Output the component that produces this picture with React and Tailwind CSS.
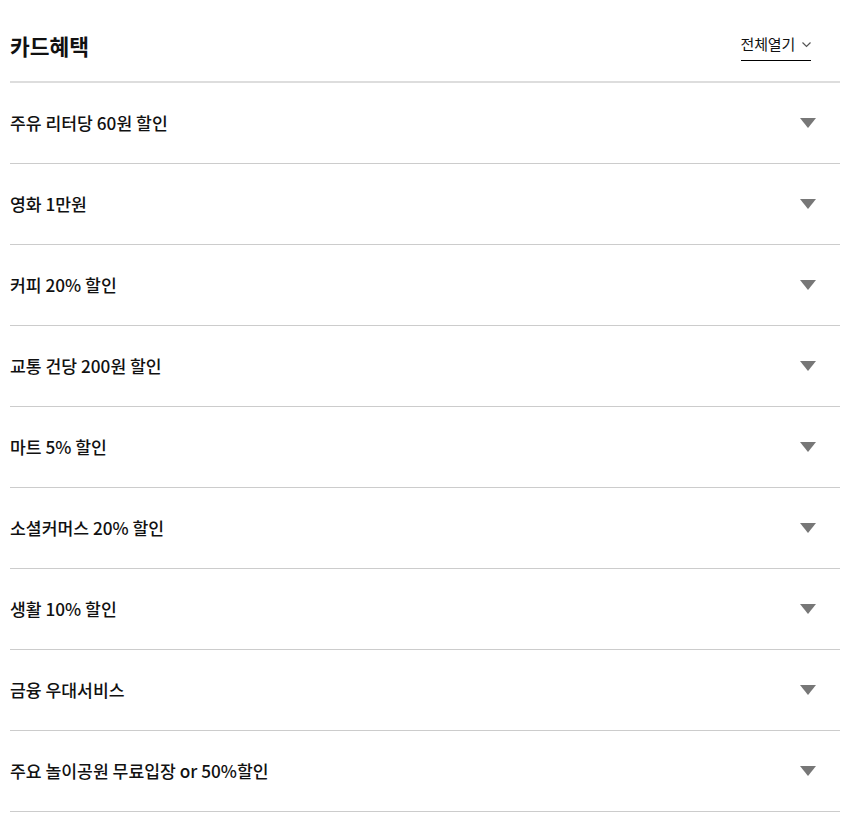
import React, { useState } from "react";

const BENEFITS = [
  "주유 리터당 60원 할인",
  "영화 1만원",
  "커피 20% 할인",
  "교통 건당 200원 할인",
  "마트 5% 할인",
  "소셜커머스 20% 할인",
  "생활 10% 할인",
  "금융 우대서비스",
  "주요 놀이공원 무료입장 or 50%할인",
];

const BenefitRow = ({ title, open, onToggle }) => (
  <li className="border-b border-[#cccccc]">
    <button
      onClick={onToggle}
      className="w-full h-[80px] flex items-center justify-between text-left"
    >
      <span className="text-[17.2px] font-medium text-[#111]">{title}</span>
      <svg
        width="16"
        height="10"
        viewBox="0 0 16 10"
        className={`mr-[24px] ${open ? "rotate-180" : ""}`}
      >
        <polygon points="0,0 16,0 8,10" fill="#777777" />
      </svg>
    </button>
    {open && (
      <div className="pb-6 text-sm text-[#666]">혜택 상세 내용이 표시됩니다.</div>
    )}
  </li>
);

export default function App() {
  const [openIdx, setOpenIdx] = useState(-1);

  return (
    <div
      className="w-full bg-white pl-[10px] pr-[5px]"
      style={{ fontFamily: '"Noto Sans CJK KR", "Noto Sans", sans-serif' }}
    >
      <div className="h-[83px] flex items-center justify-between border-b-2 border-[#dddddd] pt-[12px]">
        <h2 className="text-[21.5px] font-bold text-[#111]">카드혜택</h2>
        <button className="flex items-center gap-[7px] border-b border-black pb-[5px] mr-[29px] mt-[1px]">
          <span className="text-[15px] text-[#111] tracking-[-0.2px]">전체열기</span>
          <svg width="9" height="6" viewBox="0 0 9 6" className="mt-[2px]">
            <polyline points="0.5,0.5 4.5,4.5 8.5,0.5" fill="none" stroke="#555" strokeWidth="1.2" />
          </svg>
        </button>
      </div>
      <ul>
        {BENEFITS.map((title, i) => (
          <BenefitRow
            key={title}
            title={title}
            open={openIdx === i}
            onToggle={() => setOpenIdx(openIdx === i ? -1 : i)}
          />
        ))}
      </ul>
    </div>
  );
}
